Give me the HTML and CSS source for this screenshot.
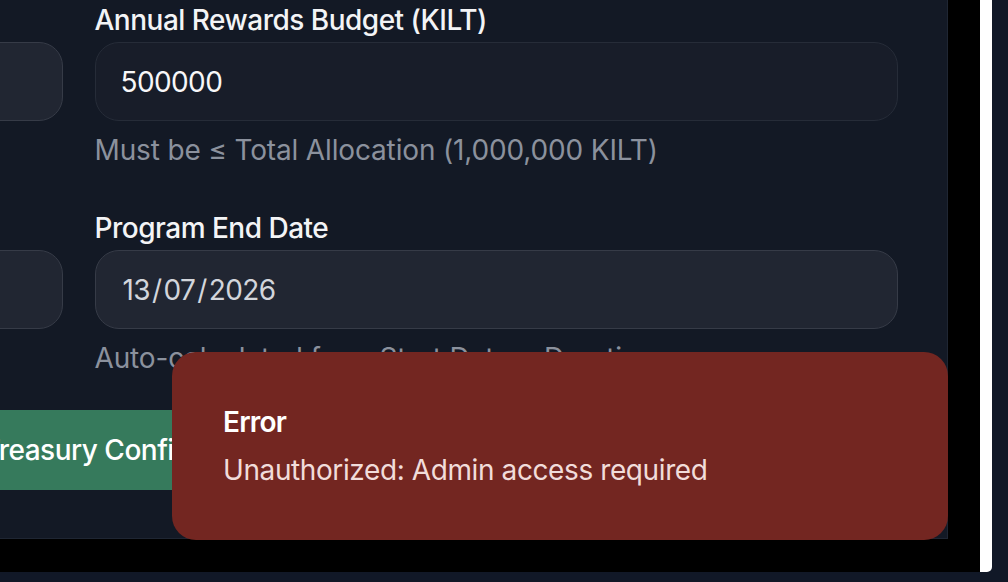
FILE: index.html
```html
<!DOCTYPE html>
<html lang="en">
<head>
<meta charset="utf-8">
<title>Treasury Configuration</title>
<link rel="stylesheet" href="styles.css">
</head>
<body>
<div class="frame">
  <div class="viewport">
    <section class="card">
      <div class="form-grid">
        <div class="field">
          <label class="label">Total Allocation (KILT)</label>
          <div class="input input-muted">1000000</div>
          <p class="hint">Total KILT allocated to the program</p>
        </div>
        <div class="field">
          <label class="label">Annual Rewards Budget (KILT)</label>
          <div class="input input-active">500000</div>
          <p class="hint">Must be ≤ Total Allocation (1,000,000 KILT)</p>
        </div>
        <div class="field field-second">
          <label class="label">Program Start Date</label>
          <div class="input input-muted">13/07/2025</div>
          <p class="hint">Date the rewards program begins</p>
        </div>
        <div class="field field-second">
          <label class="label">Program End Date</label>
          <div class="input input-muted input-date"><span>13</span><span class="sep">/</span><span>07</span><span class="sep">/</span><span>2026</span></div>
          <p class="hint">Auto-calculated from Start Date + Duration</p>
        </div>
      </div>
      <button class="btn-save" type="button">Save Treasury Configuration</button>
    </section>

    <div class="toast" role="alert">
      <div class="toast-title">Error</div>
      <div class="toast-desc">Unauthorized: Admin access required</div>
    </div>
  </div>
  <div class="scroll-strip"></div>
</div>
</body>
</html>
```

FILE: styles.css
```css
* {
  box-sizing: border-box;
}

html, body {
  margin: 0;
  padding: 0;
}

body {
  background: #111827;
  font-family: "Inter", "Noto Sans", "Liberation Sans", sans-serif;
  width: 1008px;
  height: 582px;
  overflow: hidden;
}

.frame {
  display: flex;
  height: 572px;
}

.viewport {
  position: relative;
  width: 980px;
  height: 572px;
  background: #000000;
  overflow: hidden;
}

.scroll-strip {
  width: 12px;
  height: 572px;
  background: #ffffff;
  border-bottom-right-radius: 5px;
}

.card {
  margin: -50px 32px 0 -791px;
  padding: 49px 49px 48px 49px;
  background: #131925;
  border: 1px solid #1f2633;
}

.form-grid {
  display: grid;
  grid-template-columns: 1fr 1fr;
  column-gap: 32px;
  row-gap: 38px;
}

.field {
  display: flex;
  flex-direction: column;
  min-width: 0;
}

.label {
  display: block;
  font-size: 28px;
  line-height: 40px;
  font-weight: 500;
  letter-spacing: -0.5px;
  color: #f3f4f6;
  margin-bottom: 2px;
  white-space: nowrap;
}

.input {
  height: 79px;
  border-radius: 24px;
  padding: 0 25px;
  display: flex;
  align-items: center;
  font-size: 28px;
  line-height: 40px;
  letter-spacing: -0.6px;
  white-space: nowrap;
}

.input-active {
  background: #181d29;
  border: 1px solid #262c38;
  color: #f7f7f8;
}

.input-muted {
  background: #212632;
  border: 1px solid #363b47;
  color: #d2d5db;
}

.input-date {
  padding-left: 27px;
}

.input-date .sep {
  margin: 0 2px;
}

.hint {
  margin: 9px 0 0 0;
  font-size: 28px;
  line-height: 40px;
  letter-spacing: -0.15px;
  color: #8b919d;
  white-space: nowrap;
}

.btn-save {
  display: block;
  width: 100%;
  height: 80px;
  margin-top: 32px;
  border: none;
  border-radius: 12px;
  background: #367a5c;
  color: #ffffff;
  font-family: inherit;
  font-size: 28px;
  font-weight: 500;
  letter-spacing: -0.5px;
  line-height: 40px;
  text-align: center;
  padding: 0 0 0 36px;
}

.toast {
  position: absolute;
  right: 32px;
  bottom: 32px;
  width: 776px;
  padding: 50px 48px 50px 51px;
  border-radius: 24px;
  background: #732621;
}

.toast-title {
  font-size: 28px;
  line-height: 40px;
  font-weight: 600;
  letter-spacing: -0.8px;
  color: #ffffff;
}

.toast-desc {
  margin-top: 8px;
  font-size: 28px;
  line-height: 40px;
  letter-spacing: -0.4px;
  color: #f1dcda;
}
```
